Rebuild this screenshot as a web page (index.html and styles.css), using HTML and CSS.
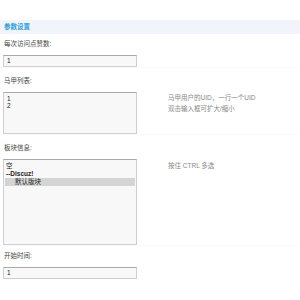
FILE: index.html
```html
<!DOCTYPE html>
<html lang="zh-CN">
<head>
    <meta charset="UTF-8">
    <title>参数设置</title>
    <link rel="stylesheet" href="styles.css">
</head>
<body>
    <div class="panel">
        <div class="panel-head">参数设置</div>

        <div class="row-label first">每次访问点赞数:</div>
        <div class="row-body">
            <div class="field input">1</div>
        </div>

        <div class="row-label">马甲列表:</div>
        <div class="row-body">
            <div class="field textarea">1<br>2</div>
            <div class="tip">马甲用户的UID，一行一个UID<br>双击输入框可扩大/缩小</div>
        </div>

        <div class="row-label">板块信息:</div>
        <div class="row-body">
            <div class="field listbox">
                <div class="opt">空</div>
                <div class="opt group">--Discuz!</div>
                <div class="opt sub selected">默认版块</div>
            </div>
            <div class="tip tip-select">按住 CTRL 多选</div>
        </div>

        <div class="row-label last">开始时间:</div>
        <div class="row-body">
            <div class="field input">1</div>
        </div>
    </div>
</body>
</html>
```

FILE: styles.css
```css
body {
    margin: 0;
    background-color: #fff;
    font-family: "Liberation Sans", "Noto Sans CJK SC", sans-serif;
    font-size: 6.5px;
    color: #444;
}

.panel {
    padding-top: 20px;
}

.panel-head {
    height: 14px;
    line-height: 14px;
    padding-left: 4px;
    background-color: #f1f5fb;
    color: #2b9bd3;
    font-weight: bold;
}

.row-label {
    padding: 9px 4px 0;
    line-height: 8px;
    border-top: 1px dotted #f4f7fb;
}

.row-label.first {
    padding-top: 6px;
    border-top: none;
}

.row-label.last {
    padding-top: 6px;
}

.row-body {
    display: flex;
    align-items: flex-start;
    padding: 0 3px;
    margin-top: 7px;
}

.field {
    width: 134px;
    box-sizing: border-box;
    border: 1px solid #cfcfcf;
    border-top-color: #aaa;
    background-color: #f8f8f8;
    color: #222;
}

.input {
    height: 12px;
    line-height: 10px;
    padding-left: 3px;
}

.textarea {
    height: 42px;
    padding: 2px 3px;
    line-height: 7px;
}

.listbox {
    height: 86px;
    padding: 2px 1px;
}

.opt {
    height: 8px;
    line-height: 8px;
    padding-left: 1px;
}

.group {
    font-weight: bold;
}

.sub {
    padding-left: 10px;
}

.selected {
    background-color: #d4d4d4;
}

.tip {
    margin-left: 31px;
    line-height: 11px;
    color: #888;
}

.tip-select {
    margin-top: 1px;
}
```
